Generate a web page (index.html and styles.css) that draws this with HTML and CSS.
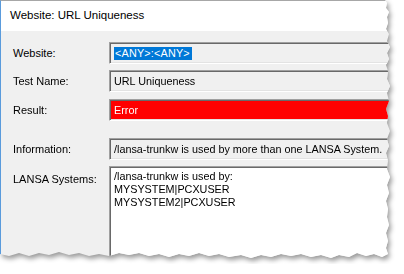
FILE: index.html
```html
<!DOCTYPE html>
<html lang="en">
<head>
    <meta charset="UTF-8">
    <title>Website: URL Uniqueness</title>
    <link rel="stylesheet" href="styles.css">
</head>
<body>
    <div class="torn-shadow">
        <div class="window">
            <div class="title-bar">Website: URL Uniqueness</div>
            <div class="form-area">
                <div class="row row-website">
                    <label>Website:</label>
                    <div class="field"><span class="selected">&lt;ANY&gt;:&lt;ANY&gt;</span></div>
                </div>
                <div class="row row-name">
                    <label>Test Name:</label>
                    <div class="field">URL Uniqueness</div>
                </div>
                <div class="row row-result">
                    <label>Result:</label>
                    <div class="field field-error">Error</div>
                </div>
                <div class="row row-info">
                    <label>Information:</label>
                    <div class="field">/lansa-trunkw is used by more than one LANSA System.</div>
                </div>
                <div class="row row-systems">
                    <label>LANSA Systems:</label>
                    <div class="field field-memo">/lansa-trunkw is used by:<br>MYSYSTEM|PCXUSER<br>MYSYSTEM2|PCXUSER</div>
                </div>
            </div>
        </div>
    </div>
</body>
</html>
```

FILE: styles.css
```css
body {
    margin: 0;
    background: #ffffff;
    font-family: 'Liberation Sans', Arial, sans-serif;
}
/* drop shadow follows the torn outline */
.torn-shadow {
    width: 400px;
    filter: drop-shadow(2px 3px 2.5px rgba(0, 0, 0, 0.4));
}
.window {
    width: 392px;
    height: 264px;
    box-sizing: border-box;
    background: #f0f0f0;
    border-top: 1px solid #a7a7a7;
    border-left: 1px solid #5a9bdc;
    clip-path: polygon(0 0, 385px 0, 387px 3px, 386px 8px, 389px 12px, 387px 17px, 388px 23px, 386px 29px, 389px 34px, 387px 41px, 390px 47px, 387px 53px, 389px 59px, 386px 65px, 388px 71px, 387px 79px, 390px 86px, 387px 93px, 389px 101px, 386px 109px, 388px 116px, 387px 123px, 390px 131px, 387px 139px, 389px 146px, 386px 153px, 388px 161px, 387px 169px, 390px 177px, 387px 185px, 389px 193px, 386px 201px, 388px 209px, 387px 217px, 389px 225px, 386px 233px, 388px 241px, 386px 248px, 388px 254px, 382px 257px, 374px 254px, 366px 256px, 357px 253px, 349px 257px, 339px 255px, 331px 258px, 321px 255px, 311px 257px, 301px 254px, 291px 256px, 281px 254px, 271px 257px, 261px 255px, 251px 258px, 241px 255px, 229px 257px, 219px 254px, 209px 256px, 199px 253px, 189px 256px, 179px 254px, 169px 257px, 159px 254px, 149px 256px, 139px 253px, 129px 255px, 119px 253px, 109px 256px, 99px 254px, 89px 256px, 79px 253px, 69px 255px, 59px 252px, 49px 255px, 39px 253px, 29px 256px, 19px 253px, 9px 256px, 0 254px);
}
.title-bar {
    height: 30px;
    line-height: 29px;
    padding-left: 9px;
    background: #ffffff;
    color: #000;
    font-size: 11.5px;
}
.form-area {
    display: flex;
    flex-direction: column;
    padding-top: 11px;
}
.row {
    display: grid;
    grid-template-columns: 108px 1fr;
}
.row-name { margin-top: 6px; }
.row-result { margin-top: 7px; }
.row-info { margin-top: 17px; }
.row-systems { margin-top: 6px; }
label {
    align-self: center;
    padding-left: 12px;
    font-size: 11px;
    color: #000;
}
.row-systems label {
    align-self: start;
    padding-top: 7px;
}
.field {
    height: 22px;
    box-sizing: border-box;
    padding: 0 4px;
    border-top: 1px solid #a0a0a0;
    border-left: 1px solid #a0a0a0;
    border-bottom: 1px solid #ffffff;
    border-right: 1px solid #ffffff;
    box-shadow: inset 1px 1px 0 #696969, inset -1px -1px 0 #e3e3e3;
    background: #f0f0f0;
    font-size: 10.8px;
    line-height: 20px;
    color: #000;
    white-space: nowrap;
    overflow: hidden;
}
.selected {
    display: inline-block;
    background: #0078d7;
    color: #ffffff;
    line-height: 13px;
    padding: 0 2px 0 1px;
    letter-spacing: 0.2px;
}
.field-error {
    background: #ff0000;
    color: #ffffff;
}
.field-memo {
    height: 100px;
    background: #ffffff;
    line-height: 13px;
    padding-top: 3px;
}
```
